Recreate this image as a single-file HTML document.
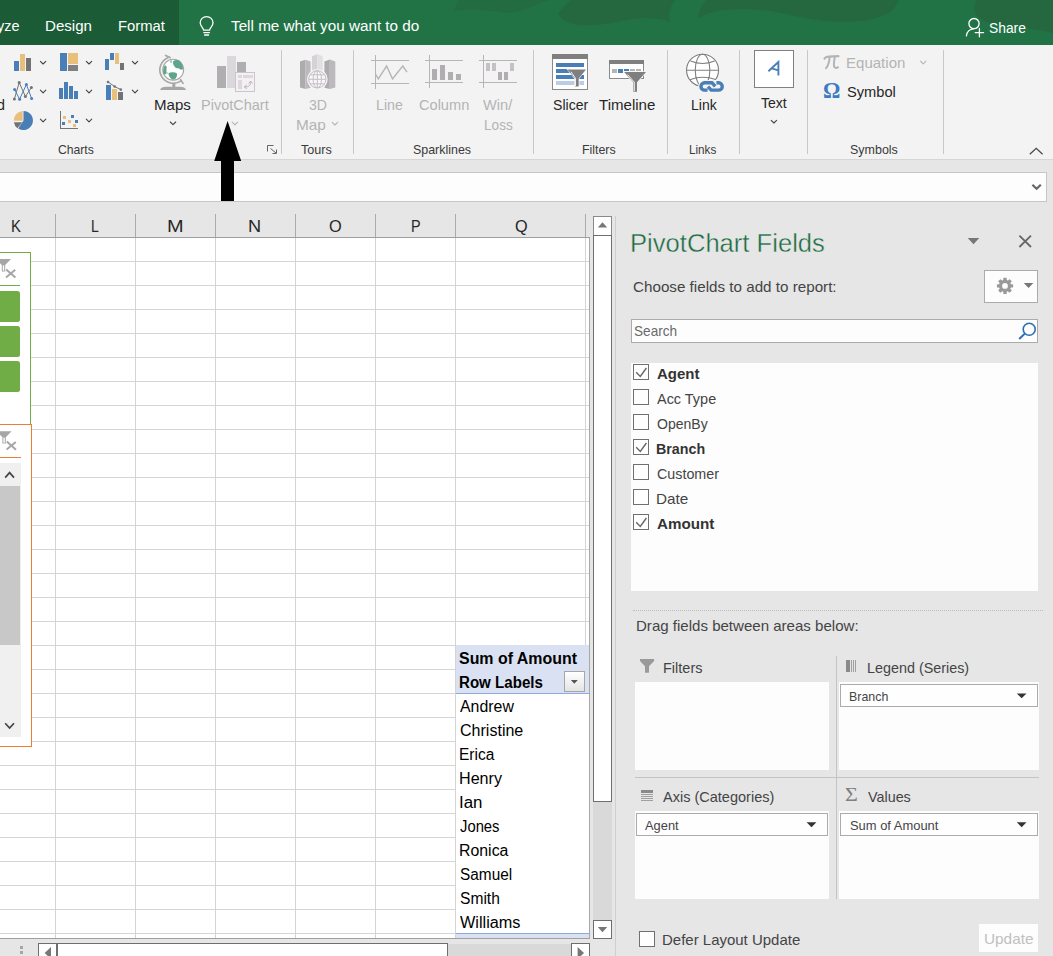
<!DOCTYPE html>
<html><head><meta charset="utf-8"><title>Excel</title>
<style>
html,body{margin:0;padding:0;background:#e6e6e6;}
#root{position:relative;width:1053px;height:956px;overflow:hidden;background:#e6e6e6;font-family:"Liberation Sans",sans-serif;}
#root div{position:absolute;box-sizing:border-box;}
#ic{position:absolute;left:0;top:0;}
.t{position:absolute;white-space:nowrap;line-height:1;transform-origin:0 0;}
.w{background:#fdfdfd;}
.cb{background:#fefefe;border:1px solid #707070;}
.it{background:#fefefe;border:1px solid #ababab;}
.sb{background:#fff;border:1px solid #6e6e6e;}

</style></head>
<body>
<div id="root">
<!-- title bar -->
<div style="left:0;top:0;width:1053px;height:45px;background:#217346;"></div>
<div style="left:0;top:0;width:179px;height:45px;background:#1b5c37;"></div>
<!-- ribbon -->
<div style="left:0;top:45px;width:1053px;height:115px;background:#f3f3f3;border-bottom:1px solid #d6d6d6;"></div>
<!-- formula bar -->
<div style="left:-2px;top:172px;width:1049px;height:30px;background:#fdfdfd;border:1px solid #c6c6c6;"></div>
<!-- sheet -->
<div style="left:0;top:238px;width:590px;height:700px;background:#fff;"></div>
<!-- pane boxes -->
<div class="w" style="left:631px;top:319px;width:407px;height:24px;border:1px solid #ababab;"></div>
<div class="w" style="left:984px;top:270px;width:54px;height:33px;border:1px solid #ababab;"></div>
<div class="w" style="left:631px;top:363px;width:407px;height:228px;"></div>
<div class="w" style="left:635px;top:682px;width:194px;height:88px;"></div>
<div class="w" style="left:839px;top:682px;width:200px;height:88px;"></div>
<div class="w" style="left:635px;top:811px;width:194px;height:88px;"></div>
<div class="w" style="left:839px;top:811px;width:200px;height:88px;"></div>
<div class="it" style="left:840px;top:684px;width:198px;height:23px;"></div>
<div class="it" style="left:636px;top:813px;width:192px;height:23px;"></div>
<div class="it" style="left:840px;top:813px;width:198px;height:23px;"></div>
<div class="w" style="left:979px;top:924px;width:59px;height:28px;"></div>
<div class="cb" style="left:639px;top:931px;width:16px;height:16px;"></div>
<div class="cb" style="left:633px;top:364px;width:16px;height:16px;"></div>
<div class="cb" style="left:633px;top:389px;width:16px;height:16px;"></div>
<div class="cb" style="left:633px;top:414px;width:16px;height:16px;"></div>
<div class="cb" style="left:633px;top:439px;width:16px;height:16px;"></div>
<div class="cb" style="left:633px;top:464px;width:16px;height:16px;"></div>
<div class="cb" style="left:633px;top:489px;width:16px;height:16px;"></div>
<div class="cb" style="left:633px;top:514px;width:16px;height:16px;"></div>
<div style="left:0px;top:261px;width:589px;height:1px;background:#d4d4d4;"></div>
<div style="left:0px;top:285px;width:589px;height:1px;background:#d4d4d4;"></div>
<div style="left:0px;top:309px;width:589px;height:1px;background:#d4d4d4;"></div>
<div style="left:0px;top:333px;width:589px;height:1px;background:#d4d4d4;"></div>
<div style="left:0px;top:357px;width:589px;height:1px;background:#d4d4d4;"></div>
<div style="left:0px;top:381px;width:589px;height:1px;background:#d4d4d4;"></div>
<div style="left:0px;top:405px;width:589px;height:1px;background:#d4d4d4;"></div>
<div style="left:0px;top:429px;width:589px;height:1px;background:#d4d4d4;"></div>
<div style="left:0px;top:453px;width:589px;height:1px;background:#d4d4d4;"></div>
<div style="left:0px;top:477px;width:589px;height:1px;background:#d4d4d4;"></div>
<div style="left:0px;top:501px;width:589px;height:1px;background:#d4d4d4;"></div>
<div style="left:0px;top:525px;width:589px;height:1px;background:#d4d4d4;"></div>
<div style="left:0px;top:549px;width:589px;height:1px;background:#d4d4d4;"></div>
<div style="left:0px;top:573px;width:589px;height:1px;background:#d4d4d4;"></div>
<div style="left:0px;top:597px;width:589px;height:1px;background:#d4d4d4;"></div>
<div style="left:0px;top:621px;width:589px;height:1px;background:#d4d4d4;"></div>
<div style="left:0px;top:645px;width:589px;height:1px;background:#d4d4d4;"></div>
<div style="left:0px;top:669px;width:589px;height:1px;background:#d4d4d4;"></div>
<div style="left:0px;top:693px;width:589px;height:1px;background:#d4d4d4;"></div>
<div style="left:0px;top:717px;width:589px;height:1px;background:#d4d4d4;"></div>
<div style="left:0px;top:741px;width:589px;height:1px;background:#d4d4d4;"></div>
<div style="left:0px;top:765px;width:589px;height:1px;background:#d4d4d4;"></div>
<div style="left:0px;top:789px;width:589px;height:1px;background:#d4d4d4;"></div>
<div style="left:0px;top:813px;width:589px;height:1px;background:#d4d4d4;"></div>
<div style="left:0px;top:837px;width:589px;height:1px;background:#d4d4d4;"></div>
<div style="left:0px;top:861px;width:589px;height:1px;background:#d4d4d4;"></div>
<div style="left:0px;top:885px;width:589px;height:1px;background:#d4d4d4;"></div>
<div style="left:0px;top:909px;width:589px;height:1px;background:#d4d4d4;"></div>
<div style="left:0px;top:933px;width:589px;height:1px;background:#d4d4d4;"></div>
<div style="left:55px;top:238px;width:1px;height:700px;background:#d4d4d4;"></div>
<div style="left:135px;top:238px;width:1px;height:700px;background:#d4d4d4;"></div>
<div style="left:215px;top:238px;width:1px;height:700px;background:#d4d4d4;"></div>
<div style="left:295px;top:238px;width:1px;height:700px;background:#d4d4d4;"></div>
<div style="left:375px;top:238px;width:1px;height:700px;background:#d4d4d4;"></div>
<div style="left:455px;top:238px;width:1px;height:700px;background:#d4d4d4;"></div>
<div style="left:585px;top:238px;width:1px;height:700px;background:#d4d4d4;"></div>
<div style="left:55px;top:214px;width:1px;height:23px;background:#ababab;"></div>
<div style="left:135px;top:214px;width:1px;height:23px;background:#ababab;"></div>
<div style="left:215px;top:214px;width:1px;height:23px;background:#ababab;"></div>
<div style="left:295px;top:214px;width:1px;height:23px;background:#ababab;"></div>
<div style="left:375px;top:214px;width:1px;height:23px;background:#ababab;"></div>
<div style="left:455px;top:214px;width:1px;height:23px;background:#ababab;"></div>
<div style="left:585px;top:214px;width:1px;height:23px;background:#ababab;"></div>
<div style="left:0px;top:237px;width:590px;height:1px;background:#9e9e9e;"></div>
<div style="left:589px;top:238px;width:1px;height:701px;background:#a8a8a8;"></div>
<div style="left:0px;top:938px;width:590px;height:1px;background:#a0a0a0;"></div>
<div style="left:456px;top:645px;width:133px;height:48px;background:#d9e1f2;"></div>
<div style="left:456px;top:693px;width:133px;height:1px;background:#8ea9db;"></div>
<div style="left:456px;top:694px;width:133px;height:239px;background:#fff;"></div>
<div style="left:456px;top:933px;width:133px;height:1px;background:#8ea9db;"></div>
<div style="left:456px;top:934px;width:133px;height:4px;background:#d9e1f2;"></div>
<div style="left:564px;top:671px;width:21px;height:21px;background:linear-gradient(#ffffff,#e4e4e4);border:1px solid #a6a6a6;"></div>
<div style="left:-5px;top:252px;width:36px;height:173px;background:#fff;border:1px solid #70ad47;"></div>
<div style="left:0px;top:285px;width:20px;height:1px;background:#70ad47;"></div>
<div style="left:-5px;top:291px;width:25px;height:30.5px;background:#70ad47;border-radius:2.5px;"></div>
<div style="left:-5px;top:326px;width:25px;height:30.5px;background:#70ad47;border-radius:2.5px;"></div>
<div style="left:-5px;top:361px;width:25px;height:30.5px;background:#70ad47;border-radius:2.5px;"></div>
<div style="left:-5px;top:424px;width:37px;height:323px;background:#fff;border:1px solid #ed7d31;"></div>
<div style="left:0px;top:457px;width:21px;height:1px;background:#ed7d31;"></div>
<div style="left:0px;top:463px;width:21px;height:274px;background:#f0f0f0;"></div>
<div style="left:0px;top:486px;width:20px;height:159px;background:#c8c8c8;"></div>
<div style="left:593px;top:235px;width:19px;height:567px;background:#fff;border:1px solid #6e6e6e;"></div>
<div style="left:593px;top:216px;width:19px;height:19px;background:#fff;border:1px solid #8a8a8a;border-bottom:none;"></div>
<div style="left:593px;top:802px;width:19px;height:118px;background:#d9d9d9;"></div>
<div style="left:593px;top:920px;width:19px;height:19px;background:#fff;border:1px solid #6e6e6e;"></div>
<div style="left:38px;top:943px;width:19px;height:20px;background:#fff;border:1px solid #6e6e6e;"></div>
<div style="left:56px;top:943px;width:392px;height:20px;background:#fff;border:1px solid #6e6e6e;border-left-width:2px;"></div>
<div style="left:448px;top:944px;width:123px;height:20px;background:#d9d9d9;"></div>
<div style="left:571px;top:943px;width:19px;height:20px;background:#fff;border:1px solid #6e6e6e;"></div>
<div style="left:20px;top:946px;width:3px;height:3px;background:#a6a6a6;"></div>
<div style="left:20px;top:951px;width:3px;height:3px;background:#a6a6a6;"></div>
<div style="left:615px;top:216px;width:1px;height:740px;background:#cfcfcf;"></div>
<div style="left:836px;top:656px;width:1px;height:243px;background:#c4c4c4;"></div>
<div style="left:635px;top:777px;width:404px;height:1px;background:#c4c4c4;"></div>
<div style="left:633px;top:610px;width:410px;height:0px;background:transparent;border-top:1px dotted #bdbdbd;"></div>
<div style="left:281px;top:50px;width:1px;height:104px;background:#c8c8c8;"></div>
<div style="left:353px;top:50px;width:1px;height:104px;background:#c8c8c8;"></div>
<div style="left:533px;top:50px;width:1px;height:104px;background:#c8c8c8;"></div>
<div style="left:667px;top:50px;width:1px;height:104px;background:#c8c8c8;"></div>
<div style="left:739px;top:50px;width:1px;height:104px;background:#c8c8c8;"></div>
<div style="left:807px;top:50px;width:1px;height:104px;background:#c8c8c8;"></div>
<div style="left:943px;top:50px;width:1px;height:104px;background:#c8c8c8;"></div>

<svg id="ic" width="1053" height="956" viewBox="0 0 1053 956">
<!-- title bar swooshes -->
<path d="M459.5 0 L452.7 11.4 C462 9 480 9.5 496 11.4 C505 13.5 515 13.5 526 9.1 C535 5.5 542 2 549 0 Z" fill="#236c42"/>
<g fill="#256840">
<path d="M571 0 C566 4 561 9 558 13.7 C562 20 568 23.5 575 24.3 C585 25.5 592 25.3 598 25 C608 24 615 22.5 621 21.3 C630 19 638 18.2 645 18.2 C655 18.5 661 19 666 20.5 L670 23.5 C669 19 669 15 669.4 12 C670.5 7 673 3 675.5 0 Z"/>
<path d="M705.7 0 C702 5 699 11 697.3 18.8 C704 14.5 712 11.5 721.3 10.4 C732 9 742 9 752.7 9.4 C764 10 774 11.5 784 13.6 C795 16 805 18.2 815.4 19.8 C826 21.5 836 22.3 846.7 22 C857 21.6 866 20.6 873.9 18.8 C881 17 886.5 14.5 890.6 11.5 C894.5 8.5 897.5 4 899 0 Z"/>
<path d="M976 0 C974.5 4 974 8 974.5 10.9 C975.5 14 977 16 979.4 17.7 C982 19.8 985 21.3 989 22.6 C995 24.4 1001 25.3 1008.7 26 C1016 27 1022 27.8 1028 28.5 C1037 29.8 1045 31.3 1053 33 L1053 0 Z"/>
</g>
<!-- bulb -->
<g fill="none" stroke="#fff" stroke-width="1.3" stroke-linecap="round" stroke-linejoin="round">
<path d="M203.6 30.2 C203.6 27.8 200.2 26.6 200.2 22.8 C200.2 19.2 203 16.6 206.6 16.6 C210.2 16.6 213 19.2 213 22.8 C213 26.6 209.6 27.8 209.6 30.2 Z"/>
<path d="M203.8 32.6 H209.4 M204.6 35 H208.6"/>
</g>
<!-- share icon -->
<g fill="none" stroke="#fff" stroke-width="1.3" stroke-linecap="round">
<circle cx="974" cy="23.6" r="5.1"/>
<path d="M966.4 35.8 C967 31.5 970 29.2 973.6 28.9"/>
<path d="M975.2 32.6 H983.6 M979.4 28.4 V36.8"/>
</g>

<!-- ===== Charts group small icons ===== -->
<g shape-rendering="crispEdges">
<!-- bar chart -->
<rect x="14" y="61" width="5" height="10" fill="#4a7eb7"/>
<rect x="20" y="54" width="5" height="17" fill="#e8c07c"/>
<rect x="26" y="58" width="5" height="13" fill="#737373"/>
<!-- treemap -->
<rect x="60" y="53" width="7" height="18" fill="#4a7eb7"/>
<rect x="68" y="53" width="10" height="11" fill="#e8c07c"/>
<rect x="68" y="65" width="10" height="6" fill="#808080"/>
<!-- waterfall -->
<rect x="105" y="59" width="4" height="11" fill="#4a7eb7"/>
<rect x="110" y="53" width="4" height="7" fill="#4a7eb7"/>
<rect x="115" y="53" width="4" height="11" fill="#e8c07c"/>
<rect x="120" y="63" width="4" height="7" fill="#737373"/>
<!-- histogram -->
<rect x="59" y="88" width="4" height="11" fill="#4a7eb7"/>
<rect x="64" y="82" width="4" height="17" fill="#4a7eb7"/>
<rect x="69" y="86" width="4" height="13" fill="#4a7eb7"/>
<rect x="74" y="91" width="4" height="8" fill="#4a7eb7"/>
<!-- combo -->
<rect x="106" y="85" width="5" height="15" fill="#4a7eb7"/>
<rect x="112" y="89" width="5" height="11" fill="#e8c07c"/>
<rect x="118" y="92" width="5" height="8" fill="#737373"/>
<!-- scatter -->
<rect x="60" y="111" width="1" height="18" fill="#737373"/>
<rect x="60" y="128" width="18" height="1" fill="#737373"/>
<rect x="63" y="116" width="3" height="3" fill="#e8c07c"/>
<rect x="71" y="115" width="3" height="3" fill="#4a7eb7"/>
<rect x="62" y="122" width="3" height="3" fill="#4a7eb7"/>
<rect x="68" y="120" width="3" height="3" fill="#e8c07c"/>
<rect x="75" y="120" width="3" height="3" fill="#4a7eb7"/>
<rect x="73" y="124" width="3" height="3" fill="#e8c07c"/>
</g>
<!-- combo line -->
<g fill="#737373" stroke="#737373"><path d="M108 82 L114.7 86.5 L120.8 89.6" fill="none" stroke-width="1"/>
<circle cx="108" cy="82" r="1.3" stroke="none"/><circle cx="114.7" cy="86.5" r="1.3" stroke="none"/><circle cx="120.8" cy="89.6" r="1.3" stroke="none"/></g>
<!-- line chart w/ markers -->
<g fill="none" stroke-width="1">
<path d="M14.4 99 L19.2 82.5 L25.4 96.5 L31.4 87.5" stroke="#737373"/>
<path d="M14.6 89.5 L19.6 99.2 L26.4 84.5 L31.6 98.4" stroke="#4a7eb7"/>
</g>
<g fill="#737373"><circle cx="14.4" cy="99" r="1.5"/><circle cx="19.2" cy="82.5" r="1.5"/><circle cx="25.4" cy="96.5" r="1.5"/><circle cx="31.4" cy="87.5" r="1.5"/></g>
<g fill="#4a7eb7"><circle cx="14.6" cy="89.5" r="1.5"/><circle cx="19.6" cy="99.2" r="1.5"/><circle cx="26.4" cy="84.5" r="1.5"/><circle cx="31.6" cy="98.4" r="1.5"/></g>
<!-- pie -->
<g>
<path d="M23.5 120.5 L23.5 111 A9.5 9.5 0 1 1 18.2 128.4 Z" fill="#4a7eb7"/>
<path d="M22.7 120.7 L22.7 111 A9.6 9.6 0 0 0 13.7 120.7 Z" fill="#e8c07c"/>
<path d="M22.3 122.2 L17.4 128.2 A9.5 9.5 0 0 1 13.9 122.2 Z" fill="#737373"/>
</g>
<!-- chevrons -->
<g fill="none" stroke="#444" stroke-width="1.1" stroke-linecap="round" stroke-linejoin="round">
<path d="M40.4 61.3 l2.7 2.7 l2.7 -2.7 M86.3 61.3 l2.7 2.7 l2.7 -2.7 M132.3 61.3 l2.7 2.7 l2.7 -2.7"/>
<path d="M40.4 90.2 l2.7 2.7 l2.7 -2.7 M86.3 90.2 l2.7 2.7 l2.7 -2.7 M132.3 90.2 l2.7 2.7 l2.7 -2.7"/>
<path d="M40.4 119.2 l2.7 2.7 l2.7 -2.7 M86.3 119.2 l2.7 2.7 l2.7 -2.7"/>
<path d="M170.3 122 l2.7 2.7 l2.7 -2.7"/>
<path d="M771.2 120.3 l2.7 2.7 l2.7 -2.7"/>
</g>
<g fill="none" stroke="#b4b4b4" stroke-width="1.1" stroke-linecap="round" stroke-linejoin="round">
<path d="M232.2 122.2 l2.7 2.7 l2.7 -2.7"/>
<path d="M332.2 122.3 l2.7 2.7 l2.7 -2.7"/>
<path d="M920.5 61.2 l2.7 2.7 l2.7 -2.7"/>
</g>
<!-- Maps globe -->
<g>
<path d="M168.4 57.4 A13.4 13.4 0 1 0 181.3 80.6" fill="none" stroke="#a6a6a6" stroke-width="1.6"/>
<path d="M165.6 55.4 L170 57.6 M180.6 79.6 L183 83.4" stroke="#a6a6a6" stroke-width="1.7" fill="none" stroke-linecap="round"/>
<rect x="172.4" y="83.2" width="2.9" height="4" fill="#a6a6a6"/>
<path d="M160.1 89.9 C160.6 87.8 163 86.8 166 86.8 H180 C183 86.8 185.5 87.8 186 89.9 Z" fill="#a6a6a6"/>
<circle cx="173.2" cy="69.7" r="10.4" fill="#fff" stroke="#a6a6a6" stroke-width="1.1"/>
<g fill="#5fa58a">
<path d="M173.2 61.2 C175 59.6 178.5 59.8 180.4 61.6 C182.4 63.6 183.2 66.5 182.9 69.2 C181.6 70.2 179.8 69.4 178.6 68.2 C176.8 68.6 175.2 67.8 174.4 66.2 C173.2 64.8 172.6 62.8 173.2 61.2 Z"/>
<path d="M164.6 65.6 C165.6 65.2 166.8 66 166.6 67.4 C166.2 69.4 166.8 71.4 166.2 73.2 C165.6 74.6 164.4 75 163.6 74 C162.8 71.2 163.2 68 164.6 65.6 Z"/>
<path d="M168.6 73.4 C170.6 72 174.4 72 176.6 73 C177.6 75 176.8 77.4 175.4 78.8 C174 80 172 79.8 171 78.4 C169.6 77.2 168.4 75.4 168.6 73.4 Z"/>
<path d="M170.4 60.6 L171.6 60.4 L171.8 62.6 L170.6 62.8 Z"/>
</g>
<path d="M164 72.6 L168.4 73.2" stroke="#5fa58a" stroke-width="0.7"/>
</g>
<!-- PivotChart (disabled) -->
<g shape-rendering="crispEdges">
<rect x="217" y="66" width="9" height="22" fill="#b1aeb1"/>
<rect x="227" y="56" width="9" height="32" fill="#dbd8db"/>
<rect x="237" y="62" width="9" height="10" fill="#b1aeb1"/>
<rect x="235.5" y="72.5" width="19" height="19" fill="#f4f0f4" stroke="#c9c5c9" stroke-width="1"/>
<rect x="238" y="75" width="4" height="3" fill="#dcd8dc"/>
<rect x="243" y="75" width="10" height="3" fill="#dcd8dc"/>
<rect x="238" y="80" width="4" height="9" fill="#dcd8dc"/>
</g>
<g fill="none" stroke="#b8b3b8" stroke-width="1" stroke-linecap="round" stroke-linejoin="round">
<path d="M244.6 87 C249 87.2 250.9 85 250.7 81.6"/>
<path d="M246.4 85 L244.4 86.9 L246.5 88.6 M248.9 83.2 L250.6 81.2 L252.4 83.2"/>
</g>
<!-- dialog launcher -->
<g fill="none" stroke="#666" stroke-width="1">
<path d="M267.5 151.5 V145.5 H273.5"/>
<path d="M270.5 148.5 L276 153 M276.5 149.5 V153.5 H272.5"/>
</g>
<!-- arrow -->
<path d="M227.6 121 L241.2 161 H234 V201 H221 V161 H214.2 Z" fill="#000"/>
<!-- 3D Map (disabled) -->
<g>
<path d="M300 61.5 L305.5 59.7 L305.5 88.9 L300 87.6 Z" fill="#aeabae"/>
<path d="M305.5 59.7 L310.6 61.6 L310.6 87.8 L305.5 88.9 Z" fill="#bcb9bc"/>
<path d="M312 56.2 L317.4 54.3 L317.4 80 L312 80 Z" fill="#d6d3d6"/>
<path d="M317.4 54.3 L322.7 56.2 L322.7 80 L317.4 80 Z" fill="#e2dfe2"/>
<path d="M324.4 61.4 L329.8 59.4 L329.8 88.9 L324.4 87.8 Z" fill="#aeabae"/>
<path d="M329.8 59.4 L335.3 61.4 L335.3 87.6 L329.8 88.9 Z" fill="#bcb9bc"/>
<circle cx="317.3" cy="79.3" r="9.6" fill="#f8f6f8" stroke="#f3f3f3" stroke-width="1.6"/>
<g fill="none" stroke="#c4c0c4" stroke-width="1">
<circle cx="317.3" cy="79.3" r="8.6"/>
<ellipse cx="317.3" cy="79.3" rx="4.2" ry="8.6"/>
<path d="M317.3 70.7 V87.9 M308.7 79.3 H325.9 M310 74.8 H324.6 M310 83.8 H324.6"/>
</g>
</g>
<!-- Sparkline Line (disabled) -->
<g fill="none" stroke="#b8b5b8">
<g shape-rendering="crispEdges" stroke-width="1"><path d="M375.5 55 V89 M371 60.5 H409 M371 83.5 H409"/></g>
<path d="M375.5 74 L378.3 78.9 L386.6 66 L392.5 78.9 L402.8 66 L407 72.2" stroke-width="1.4"/>
</g>
<!-- Sparkline Column (disabled) -->
<g shape-rendering="crispEdges">
<path d="M429.5 55 V88 M425 60.5 H463 M425 82.5 H463" fill="none" stroke="#b8b5b8" stroke-width="1"/>
<rect x="432" y="69" width="5" height="11" fill="#b1aeb1"/>
<rect x="440" y="65" width="5" height="15" fill="#b1aeb1"/>
<rect x="448" y="72" width="5" height="8" fill="#b1aeb1"/>
<rect x="456" y="74" width="5" height="6" fill="#b1aeb1"/>
</g>
<!-- Sparkline Win/Loss (disabled) -->
<g shape-rendering="crispEdges">
<path d="M483.5 55 V88 M479 60.5 H517 M479 82.5 H517" fill="none" stroke="#b8b5b8" stroke-width="1"/>
<rect x="486" y="63" width="4" height="8" fill="#c4c1c4"/>
<rect x="492" y="63" width="4" height="8" fill="#c4c1c4"/>
<rect x="498" y="72" width="4" height="8" fill="#b1aeb1"/>
<rect x="504" y="72" width="4" height="8" fill="#b1aeb1"/>
<rect x="510" y="63" width="4" height="8" fill="#c4c1c4"/>
</g>
<!-- Slicer -->
<g shape-rendering="crispEdges">
<rect x="552.5" y="54.5" width="35" height="35" fill="#fff" stroke="#8a8a8a" stroke-width="1"/>
<rect x="552" y="54" width="36" height="5.4" fill="#7f7f7f"/>
<rect x="556" y="63" width="28" height="4" fill="#4a7eb7"/>
<rect x="556" y="69" width="28" height="4" fill="#4a7eb7"/>
<rect x="556" y="75" width="28" height="4" fill="#4a7eb7"/>
<rect x="556" y="81" width="28" height="4" fill="#b9cde5"/>
</g>
<path d="M566.4 68.8 H586.9 L579.4 78.4 V87.2 H574.2 V78.4 Z" fill="#fff"/>
<path d="M567.4 69.6 H586 L578.7 78.6 V86.5 H574.9 V78.6 Z" fill="#7f7f7f"/>
<path d="M570.9 71.7 L575.5 78.3 V86.2" fill="none" stroke="#fff" stroke-width="0.9"/>
<!-- Timeline -->
<g shape-rendering="crispEdges">
<rect x="609.5" y="60.5" width="34" height="18" fill="#fff" stroke="#8a8a8a" stroke-width="1"/>
<rect x="609" y="60" width="35" height="4.4" fill="#7f7f7f"/>
<rect x="612" y="69" width="5" height="4" fill="#b4b4b4"/>
<rect x="618" y="69" width="5" height="4" fill="#4a7eb7"/>
<rect x="624" y="69" width="5" height="2" fill="#4a7eb7"/>
<rect x="630" y="69" width="5" height="2" fill="#b4b4b4"/>
<rect x="636" y="69" width="5" height="2" fill="#b4b4b4"/>
</g>
<path d="M622.8 71.2 H647.4 L637.7 82.4 V92.4 H632.5 V82.4 Z" fill="#f3f3f3"/>
<path d="M624.2 72 H646 L637 82.3 V91.7 H633.3 V82.3 Z" fill="#7f7f7f"/>
<path d="M627.6 74.6 L634.3 82.2 V91.2" fill="none" stroke="#fff" stroke-width="0.9"/>
<!-- Link -->
<g fill="none" stroke="#808080" stroke-width="1.1">
<circle cx="702.55" cy="70.2" r="16" fill="#fff"/>
<ellipse cx="702.55" cy="70.2" rx="7.3" ry="16"/>
<path d="M686.6 70.2 H718.5 M690.6 61 Q702.5 66 714.6 61 M689.9 79.7 Q702.5 75 715.6 79.5"/>
</g>
<g fill="none" stroke-linejoin="round">
<g stroke="#f3f3f3" stroke-width="5.6"><rect x="700.9" y="82.8" width="21.4" height="7.3" rx="3.65" fill="#f3f3f3"/></g>
<g stroke="#4a7eb7" stroke-width="3.4">
<path d="M715.2 86.3 L712.2 82.8 H704.6 A3.65 3.65 0 0 0 704.6 90.1 H707.6"/>
<path d="M708 86.7 L711.2 90.1 H718.6 A3.65 3.65 0 0 0 718.6 82.8 H716.4"/>
</g>
</g>
<!-- Text -->
<rect x="754.5" y="50.5" width="39" height="37" fill="#fff" stroke="#808080" stroke-width="1" shape-rendering="crispEdges"/>
<!-- Text A -->
<path d="M768.4 71.2 L778.4 62 L778.4 75.6 M771.6 68.3 L779.2 70.7" fill="none" stroke="#4a7eb7" stroke-width="1.9" stroke-linecap="butt" stroke-linejoin="miter"/>
<!-- pi -->
<g fill="none" stroke="#b4b4b4" stroke-linecap="round">
<path d="M824.6 58.6 C825.4 57 826.6 56.6 828.4 56.6 L838.4 56.2" stroke-width="2.3"/>
<path d="M829.6 57 C829.4 61.4 828.4 65.4 826 68.2" stroke-width="2"/>
<path d="M834.8 57 C834.2 60.4 833.6 63.6 834 66 C834.4 68 836.4 68.4 838 67.2" stroke-width="2"/>
</g>
<!-- collapse ribbon ^ -->
<path d="M1029.8 154.2 L1036.2 148.2 L1042.6 154.2" fill="none" stroke="#444" stroke-width="1.2"/>
<!-- formula bar chevron -->
<path d="M1032.4 184.8 L1036.6 188.8 L1040.8 184.8" fill="none" stroke="#666" stroke-width="2.2"/>
<!-- field checkmarks -->
<g fill="none" stroke="#666" stroke-width="1.4">
<path d="M636.2 372.3 L640.3 376.5 L646.4 368"/>
<path d="M636.2 447.3 L640.3 451.5 L646.4 443"/>
<path d="M636.2 522.3 L640.3 526.5 L646.4 518"/>
</g>
<!-- pane header: dropdown triangle, close X -->
<path d="M967.7 238 H979.3 L973.5 244.2 Z" fill="#777"/>
<path d="M1019.4 235.6 L1031 247 M1031 235.6 L1019.4 247" stroke="#666" stroke-width="1.8" fill="none"/>
<!-- gear -->
<g transform="translate(1005 285.9)">
<g fill="#999">
<circle r="6.1"/>
<rect x="-1.7" y="-8.1" width="3.4" height="16.2" rx="0.6" transform="rotate(0)"/><rect x="-1.7" y="-8.1" width="3.4" height="16.2" rx="0.6" transform="rotate(45)"/><rect x="-1.7" y="-8.1" width="3.4" height="16.2" rx="0.6" transform="rotate(90)"/><rect x="-1.7" y="-8.1" width="3.4" height="16.2" rx="0.6" transform="rotate(135)"/>
</g>
<circle r="2.9" fill="#fdfdfd"/>
</g>
<path d="M1023.8 283 H1033.3 L1028.55 288 Z" fill="#777"/>
<!-- search icon -->
<g fill="none" stroke="#2e6eb5" stroke-width="1.6">
<circle cx="1029.2" cy="329.2" r="6"/>
<path d="M1024.8 333.6 L1019.2 339" stroke-width="2"/>
</g>
<!-- area icons -->
<path d="M640 659 H654.1 V661 L649 666.2 V672.7 H645 V666.2 L640 661 Z" fill="#9a9a9a"/>
<g shape-rendering="crispEdges" fill="#8a8a8a">
<rect x="846" y="660" width="4" height="12"/>
<rect x="851" y="660" width="1" height="12" fill="#a0a0a0"/><rect x="853" y="660" width="1" height="12" fill="#a0a0a0"/><rect x="855" y="660" width="1" height="12" fill="#a0a0a0"/>
<rect x="641" y="790" width="12" height="3"/>
<rect x="641" y="794" width="12" height="1" fill="#a0a0a0"/><rect x="641" y="796" width="12" height="1" fill="#a0a0a0"/><rect x="641" y="798" width="12" height="1" fill="#a0a0a0"/><rect x="641" y="800" width="12" height="1" fill="#a0a0a0"/>
</g>
<!-- item dropdown arrows -->
<g fill="#333">
<path d="M1016.8 693.4 H1026.5 L1021.65 698.3 Z"/>
<path d="M806.6 822.3 H816.4 L811.5 827.2 Z"/>
<path d="M1016.8 822.3 H1026.5 L1021.65 827.2 Z"/>
</g>
<!-- pivot dropdown arrow -->
<path d="M570.8 680 H577.8 L574.3 683.8 Z" fill="#555"/>
<!-- scrollbar arrows -->
<g fill="#777">
<path d="M597.8 227.4 L602.5 222.2 L607.2 227.4 Z"/>
<path d="M597.8 927 H607.2 L602.5 932.2 Z"/>
<path d="M51 947 V959 L44.6 953 Z"/>
<path d="M577.6 947 V959 L584 953 Z"/>
</g>
<!-- slicer clear-filter icons -->
<g>
<path d="M-4 259 H11 L5.2 265 V271.4 H1.8 V265 Z" fill="#a6a6a6"/>
<rect x="2.8" y="265.4" width="1.4" height="5.2" fill="#fff"/>
<path d="M6.2 269.4 L15.4 277.6 M15.2 269.8 L6 277.4" stroke="#a6a6a6" stroke-width="2" fill="none"/>
</g>
<g transform="translate(0.6 172.2)">
<path d="M-4 259 H11 L5.2 265 V271.4 H1.8 V265 Z" fill="#a6a6a6"/>
<rect x="2.8" y="265.4" width="1.4" height="5.2" fill="#fff"/>
<path d="M6.2 269.4 L15.4 277.6 M15.2 269.8 L6 277.4" stroke="#a6a6a6" stroke-width="2" fill="none"/>
</g>
<!-- slicer scrollbar chevrons -->
<g fill="none" stroke="#444" stroke-width="1.7">
<path d="M5.2 477.6 L9.6 472.6 L14 477.6"/>
<path d="M5.2 723.2 L9.6 728 L14 723.2"/>
</g>

</svg>
<span class="t" style="left:-3.40px;top:17px;font-size:15.5px;line-height:17px;color:#ffffff;transform:scaleX(0.9319);">yze</span>
<span class="t" style="left:45.43px;top:17px;font-size:15.5px;line-height:17px;color:#ffffff;transform:scaleX(0.9737);">Design</span>
<span class="t" style="left:118.34px;top:17px;font-size:15.5px;line-height:17px;color:#ffffff;transform:scaleX(0.9573);">Format</span>
<span class="t" style="left:230.60px;top:17px;font-size:15.5px;line-height:17px;color:#ffffff;transform:scaleX(0.9845);">Tell me what you want to do</span>
<span class="t" style="left:988.60px;top:19px;font-size:15.5px;line-height:17px;color:#ffffff;transform:scaleX(0.8910);">Share</span>
<span class="t" style="left:-2.60px;top:96px;font-size:15px;line-height:17px;color:#262626;transform:scaleX(0.9500);">d</span>
<span class="t" style="left:154.40px;top:96px;font-size:15px;line-height:17px;color:#262626;transform:scaleX(1.0034);">Maps</span>
<span class="t" style="left:200.53px;top:96px;font-size:15px;line-height:17px;color:#b4b4b4;transform:scaleX(0.9662);">PivotChart</span>
<span class="t" style="left:308.50px;top:96px;font-size:15px;line-height:17px;color:#b4b4b4;transform:scaleX(0.9409);">3D</span>
<span class="t" style="left:295.78px;top:116px;font-size:15px;line-height:17px;color:#b4b4b4;transform:scaleX(1.0238);">Map</span>
<span class="t" style="left:375.65px;top:96px;font-size:15px;line-height:17px;color:#b4b4b4;transform:scaleX(0.9475);">Line</span>
<span class="t" style="left:418.50px;top:96px;font-size:15px;line-height:17px;color:#b4b4b4;transform:scaleX(0.9719);">Column</span>
<span class="t" style="left:482.60px;top:96px;font-size:15px;line-height:17px;color:#b4b4b4;transform:scaleX(0.9730);">Win/</span>
<span class="t" style="left:483.59px;top:116px;font-size:15px;line-height:17px;color:#b4b4b4;transform:scaleX(0.9077);">Loss</span>
<span class="t" style="left:552.50px;top:96px;font-size:15px;line-height:17px;color:#262626;transform:scaleX(0.9384);">Slicer</span>
<span class="t" style="left:598.70px;top:96px;font-size:15px;line-height:17px;color:#262626;transform:scaleX(1.0039);">Timeline</span>
<span class="t" style="left:690.87px;top:96px;font-size:15px;line-height:17px;color:#262626;transform:scaleX(0.9327);">Link</span>
<span class="t" style="left:760.50px;top:94px;font-size:15px;line-height:17px;color:#262626;transform:scaleX(0.9350);">Text</span>
<span class="t" style="left:845.70px;top:54px;font-size:15px;line-height:17px;color:#b4b4b4;transform:scaleX(1.0022);">Equation</span>
<span class="t" style="left:846.70px;top:83px;font-size:15px;line-height:17px;color:#262626;transform:scaleX(0.9762);">Symbol</span>
<span class="t" style="left:58.40px;top:142px;font-size:13px;line-height:15px;color:#3a3a3a;transform:scaleX(0.9358);">Charts</span>
<span class="t" style="left:301.40px;top:142px;font-size:13px;line-height:15px;color:#3a3a3a;transform:scaleX(0.9694);">Tours</span>
<span class="t" style="left:413.00px;top:142px;font-size:13px;line-height:15px;color:#3a3a3a;transform:scaleX(0.9559);">Sparklines</span>
<span class="t" style="left:582.45px;top:142px;font-size:13px;line-height:15px;color:#3a3a3a;transform:scaleX(0.9516);">Filters</span>
<span class="t" style="left:688.60px;top:142px;font-size:13px;line-height:15px;color:#3a3a3a;transform:scaleX(0.8979);">Links</span>
<span class="t" style="left:850.00px;top:142px;font-size:13px;line-height:15px;color:#3a3a3a;transform:scaleX(0.9593);">Symbols</span>
<span class="t" style="left:11.10px;top:217px;font-size:16.5px;line-height:18px;color:#262626;transform:scaleX(0.9000);">K</span>
<span class="t" style="left:91.45px;top:217px;font-size:16.5px;line-height:18px;color:#262626;transform:scaleX(0.8500);">L</span>
<span class="t" style="left:166.79px;top:217px;font-size:16.5px;line-height:18px;color:#262626;transform:scaleX(1.2083);">M</span>
<span class="t" style="left:248.40px;top:217px;font-size:16.5px;line-height:18px;color:#262626;transform:scaleX(1.1000);">N</span>
<span class="t" style="left:329.00px;top:217px;font-size:16.5px;line-height:18px;color:#262626;transform:scaleX(0.9923);">O</span>
<span class="t" style="left:410.53px;top:217px;font-size:16.5px;line-height:18px;color:#262626;transform:scaleX(0.8700);">P</span>
<span class="t" style="left:514.60px;top:217px;font-size:16.5px;line-height:18px;color:#262626;transform:scaleX(0.9846);">Q</span>
<span class="t" style="left:459.30px;top:650px;font-size:15.8px;line-height:17px;color:#000000;transform:scaleX(1.0091);font-weight:700;">Sum of Amount</span>
<span class="t" style="left:458.74px;top:674px;font-size:15.8px;line-height:17px;color:#000000;transform:scaleX(0.9553);font-weight:700;">Row Labels</span>
<span class="t" style="left:459.80px;top:698px;font-size:15.6px;line-height:17px;color:#000000;transform:scaleX(1.0184);">Andrew</span>
<span class="t" style="left:459.80px;top:722px;font-size:15.6px;line-height:17px;color:#000000;transform:scaleX(1.0286);">Christine</span>
<span class="t" style="left:458.80px;top:746px;font-size:15.6px;line-height:17px;color:#000000;transform:scaleX(0.9956);">Erica</span>
<span class="t" style="left:458.77px;top:770px;font-size:15.6px;line-height:17px;color:#000000;transform:scaleX(1.0343);">Henry</span>
<span class="t" style="left:458.72px;top:794px;font-size:15.6px;line-height:17px;color:#000000;transform:scaleX(1.0847);">Ian</span>
<span class="t" style="left:459.80px;top:818px;font-size:15.6px;line-height:17px;color:#000000;transform:scaleX(0.9494);">Jones</span>
<span class="t" style="left:458.78px;top:842px;font-size:15.6px;line-height:17px;color:#000000;transform:scaleX(1.0174);">Ronica</span>
<span class="t" style="left:459.80px;top:866px;font-size:15.6px;line-height:17px;color:#000000;transform:scaleX(0.9865);">Samuel</span>
<span class="t" style="left:459.80px;top:890px;font-size:15.6px;line-height:17px;color:#000000;transform:scaleX(1.0003);">Smith</span>
<span class="t" style="left:459.80px;top:914px;font-size:15.6px;line-height:17px;color:#000000;transform:scaleX(1.0423);">Williams</span>
<span class="t" style="left:629.57px;top:228px;font-size:26.5px;line-height:30px;color:#1b6b3f;transform:scaleX(0.9658);-webkit-text-stroke:0.4px #e6e6e6;">PivotChart Fields</span>
<span class="t" style="left:632.60px;top:278px;font-size:15px;line-height:17px;color:#444444;transform:scaleX(1.0131);">Choose fields to add to report:</span>
<span class="t" style="left:633.60px;top:322px;font-size:15px;line-height:17px;color:#6a6a6a;transform:scaleX(0.9071);">Search</span>
<span class="t" style="left:656.60px;top:365px;font-size:15px;line-height:17px;color:#333333;transform:scaleX(0.9976);font-weight:700;">Agent</span>
<span class="t" style="left:656.60px;top:390px;font-size:15px;line-height:17px;color:#444444;transform:scaleX(0.9633);">Acc Type</span>
<span class="t" style="left:656.60px;top:415px;font-size:15px;line-height:17px;color:#444444;transform:scaleX(0.9360);">OpenBy</span>
<span class="t" style="left:655.65px;top:440px;font-size:15px;line-height:17px;color:#333333;transform:scaleX(0.9502);font-weight:700;">Branch</span>
<span class="t" style="left:656.60px;top:465px;font-size:15px;line-height:17px;color:#444444;transform:scaleX(0.9535);">Customer</span>
<span class="t" style="left:655.58px;top:490px;font-size:15px;line-height:17px;color:#444444;transform:scaleX(1.0184);">Date</span>
<span class="t" style="left:656.60px;top:515px;font-size:15px;line-height:17px;color:#333333;transform:scaleX(1.0131);font-weight:700;">Amount</span>
<span class="t" style="left:635.70px;top:617px;font-size:15px;line-height:17px;color:#444444;transform:scaleX(1.0035);">Drag fields between areas below:</span>
<span class="t" style="left:663.03px;top:659px;font-size:15px;line-height:17px;color:#444444;transform:scaleX(0.9661);">Filters</span>
<span class="t" style="left:866.54px;top:659px;font-size:15px;line-height:17px;color:#444444;transform:scaleX(0.9571);">Legend (Series)</span>
<span class="t" style="left:663.30px;top:788px;font-size:15px;line-height:17px;color:#444444;transform:scaleX(0.9675);">Axis (Categories)</span>
<span class="t" style="left:867.70px;top:788px;font-size:15px;line-height:17px;color:#444444;transform:scaleX(0.9559);">Values</span>
<span class="t" style="left:848.55px;top:689px;font-size:13px;line-height:15px;color:#444444;transform:scaleX(0.9535);">Branch</span>
<span class="t" style="left:645.00px;top:818px;font-size:13px;line-height:15px;color:#444444;transform:scaleX(0.9895);">Agent</span>
<span class="t" style="left:849.50px;top:818px;font-size:13px;line-height:15px;color:#444444;transform:scaleX(0.9946);">Sum of Amount</span>
<span class="t" style="left:661.80px;top:931px;font-size:15px;line-height:17px;color:#444444;transform:scaleX(0.9987);">Defer Layout Update</span>
<span class="t" style="left:983.58px;top:930px;font-size:15px;line-height:17px;color:#c0c0c0;transform:scaleX(1.0228);">Update</span>
<span class="t" style="left:823.04px;top:78px;font-size:22.6px;line-height:25px;color:#3d7cc0;transform:scaleX(0.9588);font-weight:700;font-family:'Liberation Serif', serif;">Ω</span>
<span class="t" style="left:845.20px;top:785px;font-size:18.5px;line-height:20px;color:#808080;transform:scaleX(1.1900);font-family:'Liberation Serif', serif;">Σ</span>
</div>
</body></html>
